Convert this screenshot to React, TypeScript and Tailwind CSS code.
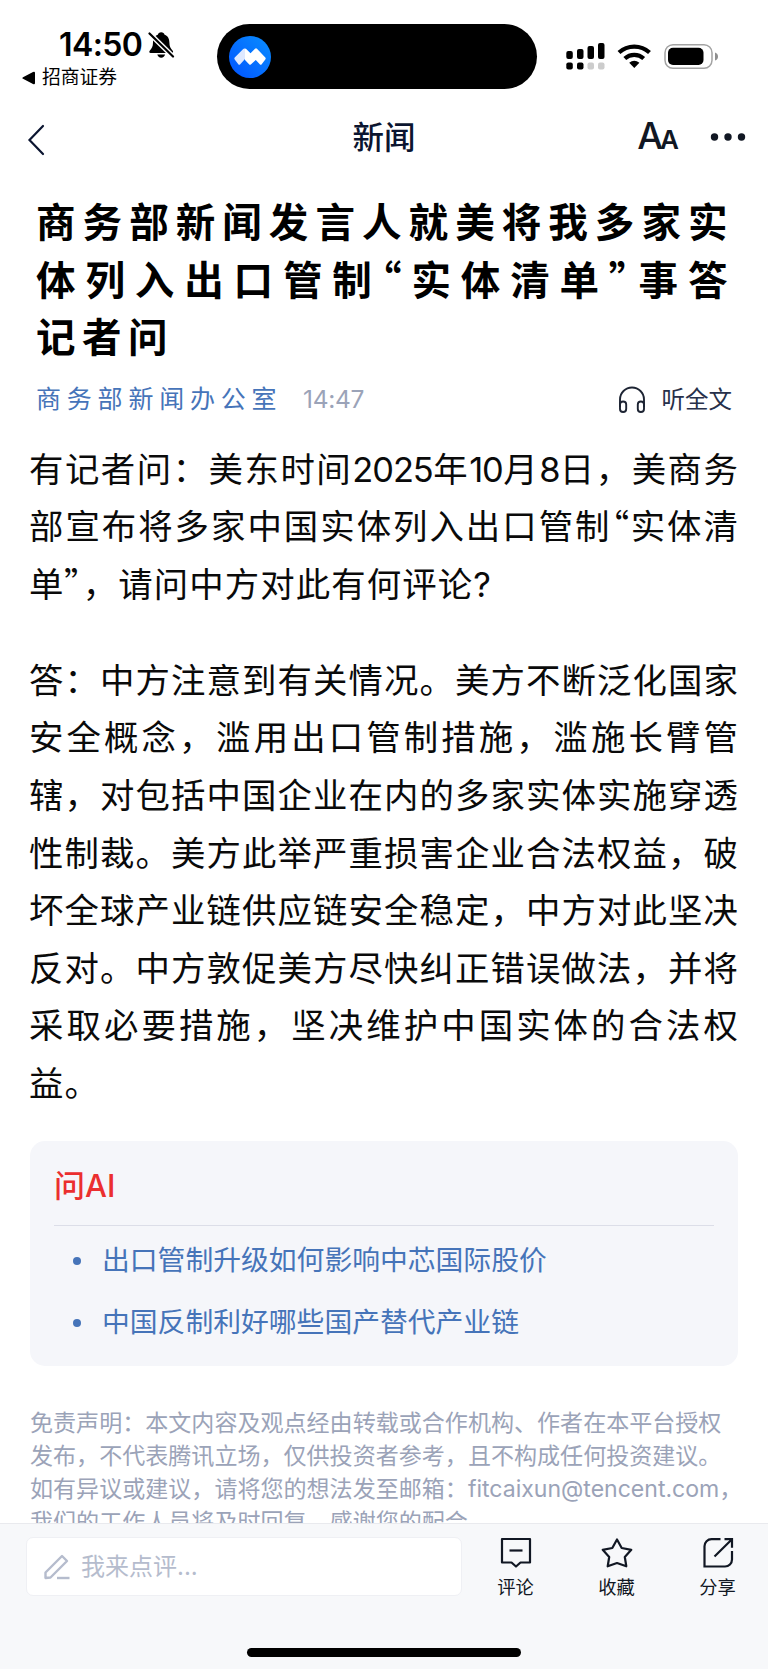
import React from 'react';

const titleLines = ['商务部新闻发言人就美将我多家实', '体列入出口管制“实体清单”事答', '记者问'];

const paragraphs = [
  ['有记者问：美东时间2025年10月8日，美商务', '部宣布将多家中国实体列入出口管制“实体清', '单”，请问中方对此有何评论?'],
  [
    '答：中方注意到有关情况。美方不断泛化国家',
    '安全概念，滥用出口管制措施，滥施长臂管',
    '辖，对包括中国企业在内的多家实体实施穿透',
    '性制裁。美方此举严重损害企业合法权益，破',
    '坏全球产业链供应链安全稳定，中方对此坚决',
    '反对。中方敦促美方尽快纠正错误做法，并将',
    '采取必要措施，坚决维护中国实体的合法权',
    '益。',
  ],
];

const questions = ['出口管制升级如何影响中芯国际股价', '中国反制利好哪些国产替代产业链'];

const disclaimer = [
  '免责声明：本文内容及观点经由转载或合作机构、作者在本平台授权',
  '发布，不代表腾讯立场，仅供投资者参考，且不构成任何投资建议。',
  '如有异议或建议，请将您的想法发至邮箱：fitcaixun@tencent.com，',
  '我们的工作人员将及时回复，感谢您的配合。',
];

// Digits are set tighter than the hanzi, quotes use the proportional CJK glyphs
const renderRuns = (line: string) =>
  line.split(/(\d+|[“”])/).map((run, i) => {
    if (/^\d+$/.test(run)) {
      return (
        <span key={i} className="tracking-[-1px]">
          {run}
        </span>
      );
    }
    if (run === '“' || run === '”') {
      return (
        <span key={i} className="font-['Noto_Sans_CJK_SC',sans-serif] leading-none [font-feature-settings:'palt']">
          {run}
        </span>
      );
    }
    return run;
  });

// Every line but the last one fills the column
const Lines: React.FC<{ lines: string[] }> = ({ lines }) => (
  <>
    {lines.map((line, i) => (
      <span
        key={line}
        className={`block whitespace-nowrap ${i < lines.length - 1 ? '[text-align-last:justify]' : ''}`}
      >
        {renderRuns(line)}
      </span>
    ))}
  </>
);

const StatusBar = () => (
  <div className="flex h-24 shrink-0 items-start text-black">
    <div className="w-[217px] shrink-0 pt-[28px]">
      <div className="flex h-[33px] items-center pl-[59px]">
        <span className="w-[84px] text-[32px] leading-[33px] font-semibold tracking-[-0.6px] whitespace-nowrap">14:50</span>
        <svg className="ml-[5px]" width="27" height="28" viewBox="0 0 27 28" fill="none">
          <path
            d="M13.2 1.2c-1.8 0-3 1-3.4 2.5C6.300 5 5 8 5 11.500c0 4-1.200 5.800-3.300 8.200-.8.9-.4 2.300.9 2.300h21.200c1.300 0 1.700-1.400.9-2.300-2.100-2.400-3.300-4.200-3.300-8.200 0-3.500-1.300-6.500-4.800-7.800-.4-1.500-1.600-2.500-3.400-2.500Z"
            fill="#000"
          />
          <path d="M9.300 23.500h7.800c-.5 2-1.900 3.200-3.900 3.200s-3.400-1.200-3.900-3.200Z" fill="#000" />
          <path d="M0 1 25.500 26" stroke="#fff" strokeWidth="5" />
          <path d="M1.500 2.500 25 25.500" stroke="#000" strokeWidth="2.200" strokeLinecap="round" />
        </svg>
      </div>
      <div className="flex h-8 items-center pt-px pl-[22px]">
        <svg width="14" height="14" viewBox="0 0 14 14">
          <path d="M1 6.200 11 .9q2-.8 2 1v10.200q0 1.800-2 1L1 7.800q-1.300-.8 0-1.600Z" fill="#000" />
        </svg>
        <span className="ml-[6px] text-[18.800px] leading-8">招商证券</span>
      </div>
    </div>
    <div className="mt-6 flex h-[65px] w-80 items-center rounded-full bg-black pl-3">
      <svg width="42" height="42" viewBox="0 0 42 42">
        <defs>
          <linearGradient id="logo" x1="0" y1="1" x2="1" y2="0">
            <stop offset="0" stopColor="#0052ff" />
            <stop offset="1" stopColor="#0a8fff" />
          </linearGradient>
        </defs>
        <circle cx="21" cy="21" r="21" fill="url(#logo)" />
        <path
          d="M16 13q.2-1 1-.3l4.500 4.500 4.500-4.500q1-.7 2 0l8.300 8.800q.8 1 0 2L32.500 28.500q-.8.600-1.500 0L26.800 24l-5 4.500q-.8.600-1.500 0L16 24Z"
          fill="#fff"
        />
        <path d="M16 12.500q-1-.3-1.800.4L5.700 21.500q-.8 1 0 2L9.500 28.500q.8.600 1.500 0L16 23Z" fill="#dfe9ff" />
      </svg>
    </div>
    <svg className="mt-[42px] ml-[29px]" width="154" height="29" viewBox="0 0 154 29">
      <g fill="#000">
        <rect x=".3" y="9" width="6.500" height="8" rx="2" />
        <rect x="11" y="7" width="6.500" height="10" rx="2" />
        <rect x="21.500" y="4" width="6.500" height="13" rx="2" />
        <rect x="32" y="1" width="6.500" height="16" rx="2" />
        <rect x=".3" y="20.500" width="6.500" height="7" rx="2" />
        <rect x="11" y="20.500" width="6.500" height="7" rx="2" />
      </g>
      <rect x="21.500" y="20.500" width="6.500" height="7" rx="2" fill="#ccc" />
      <rect x="32" y="20.500" width="6.500" height="7" rx="2" fill="#ccc" />
      <path d="M53 10.500a22.500 22.500 0 0 1 30.500 0" stroke="#000" strokeWidth="4.200" fill="none" />
      <path d="M58.800 16.500a14 14 0 0 1 18.900 0" stroke="#000" strokeWidth="4.200" fill="none" />
      <path d="M63.200 20.700q5-4 10.200 0l-5.100 5.300Z" fill="#000" />
      <rect x="99" y="2.700" width="47" height="23.600" rx="8" fill="none" stroke="#a3a3a3" strokeWidth="1.500" />
      <rect x="102" y="5.800" width="35.500" height="17.200" rx="5" fill="#000" />
      <path d="M149 10.500q3 1 3 4t-3 4Z" fill="#8f8f8f" />
    </svg>
  </div>
);

const NavBar = () => (
  <div className="grid h-[84px] shrink-0 grid-cols-3 items-center text-[#0b1530]">
    <svg className="mt-1 ml-[27px]" width="18" height="32" viewBox="0 0 18 32" fill="none">
      <path d="M16 2 2.500 16 16 30" stroke="currentColor" strokeWidth="2.200" strokeLinecap="round" />
    </svg>
    <h1 className="text-center text-[31.500px] leading-none font-medium">新闻</h1>
    <div className="flex items-center justify-end pr-[22px] pb-[3px] text-[#111723]">
      <span className="flex items-baseline leading-none">
        <span className="text-[36.500px] leading-none font-medium">A</span>
        <span className="-ml-[3px] text-[26px] leading-none font-semibold">A</span>
      </span>
      <svg className="ml-[31px]" width="36" height="10" viewBox="0 0 36 10" fill="currentColor">
        <circle cx="4.500" cy="5" r="3.700" />
        <circle cx="18" cy="5" r="3.700" />
        <circle cx="31.500" cy="5" r="3.700" />
      </svg>
    </div>
  </div>
);

const Article = () => (
  <main className="flex-1 overflow-hidden">
    <h2 className="mt-[15px] ml-9 w-[698px] text-[39.500px] leading-[57.500px] font-bold tracking-[6.500px] text-black">
      <Lines lines={titleLines} />
    </h2>

    <div className="mt-[12px] flex h-10 items-center pr-9 pl-9">
      <span className="w-[267px] text-[25px] tracking-[5.800px] whitespace-nowrap text-[#4674b9]">商务部新闻办公室</span>
      <span className="text-[24.500px] tracking-[-0.3px] text-[#9ba3b8]">14:47</span>
      <div className="ml-auto flex items-center text-[#27304a]">
        <svg width="28" height="28" viewBox="0 0 28 28" fill="none" stroke="#1d2433" strokeWidth="1.900">
          <path d="M2 21v-7.500a12 12 0 0 1 24 0V21" />
          <rect x="2" y="15.500" width="6.200" height="10.500" rx="3.100" />
          <rect x="19.800" y="15.500" width="6.200" height="10.500" rx="3.100" />
        </svg>
        <span className="ml-4 text-[23.500px]">听全文</span>
      </div>
    </div>

    <div className="mt-[21px] ml-[29px] flex w-[710px] flex-col gap-[38.500px] text-[34.400px] leading-[57.600px] tracking-[1.100px] text-[#0a0a0a]">
      {paragraphs.map((lines) => (
        <p key={lines[0]}>
          <Lines lines={lines} />
        </p>
      ))}
    </div>

    <section className="mx-[30px] mt-7 h-[225px] rounded-[15px] bg-[#f5f6fa] px-6">
      <h3 className="flex h-[85px] items-center border-b border-[#dcdee8] pt-2 text-[31px] font-medium text-[#eb2f2f]">问AI</h3>
      <ul className="pt-[4px] text-[27.800px] text-[#4674b9]">
        {questions.map((question) => (
          <li key={question} className="flex h-[62px] items-center pl-[19px]">
            <span className="mr-[21px] size-[8px] rounded-full bg-[#4674b9]" />
            {question}
          </li>
        ))}
      </ul>
    </section>

    <p className="mt-[41px] ml-[30px] text-[23.050px] leading-[33.300px] whitespace-nowrap text-[#9ba3b8]">
      {disclaimer.map((line) => (
        <span key={line} className="block">
          {line}
        </span>
      ))}
    </p>
  </main>
);

const BottomBar = () => (
  <footer className="flex h-[146px] shrink-0 flex-col border-t border-[#e9eaee] bg-[#f7f8fa]">
    <div className="flex items-start pt-[13px] pl-[26px]">
      <div className="flex h-[59px] w-[437px] items-center rounded-[7px] border border-[#eff0f4] bg-white pl-[17px] text-[#b5bccd]">
        <svg width="26" height="26" viewBox="0 0 26 26" fill="none" stroke="currentColor" strokeWidth="2.400">
          <path d="M1.500 24v-5.500L18 2l5 5L6.500 23.500 1.500 24Z" strokeLinejoin="round" />
          <path d="M13 24h12.500" />
        </svg>
        <span className="ml-[11px] text-[24px]">我来点评...</span>
      </div>
      <div className="flex flex-1 text-[18.300px] text-[#111723]">
        <div className="ml-[3px] flex w-[101px] flex-col items-center gap-[6px]">
          <svg width="32" height="32" viewBox="0 0 32 32" fill="none" stroke="currentColor" strokeWidth="2.200">
            <path d="M2 2h28v23.500h-9.500L16 29.500l-4.500-4H2Z" strokeLinejoin="round" />
            <path d="M9.500 13.500h13" />
          </svg>
          <span className="leading-6">评论</span>
        </div>
        <div className="flex w-[101px] flex-col items-center gap-[6px]">
          <svg width="32" height="32" viewBox="0 0 32 32" fill="none" stroke="currentColor" strokeWidth="2.200">
            <path d="m16 2.500 4.700 8.500 9.600 1.800-6.500 7.200 1.500 9.300L16 26l-9.300 3.300L8.200 20l-6.500-7.200 9.600-1.800Z" strokeLinejoin="round" />
          </svg>
          <span className="leading-6">收藏</span>
        </div>
        <div className="flex w-[101px] flex-col items-center gap-[6px]">
          <svg width="32" height="32" viewBox="0 0 32 32" fill="none" stroke="currentColor" strokeWidth="2.200">
            <path d="M18.500 2.200H9.500a7 7 0 0 0-7 7V29.500h20.500a7 7 0 0 0 7-7V14" />
            <path d="M22.500 2.200H30v8.500M30 2.200 12.500 19.500" />
          </svg>
          <span className="leading-6">分享</span>
        </div>
      </div>
    </div>
    <div className="mx-auto mt-[49px] h-[9px] w-[274px] rounded-full bg-black" />
  </footer>
);

export default function App() {
  return (
    <div
      lang="zh-CN"
      className="flex h-[1669px] w-[768px] flex-col overflow-hidden bg-white font-['Inter','Noto_Sans_CJK_SC',sans-serif]"
    >
      <StatusBar />
      <NavBar />
      <Article />
      <BottomBar />
    </div>
  );
}
